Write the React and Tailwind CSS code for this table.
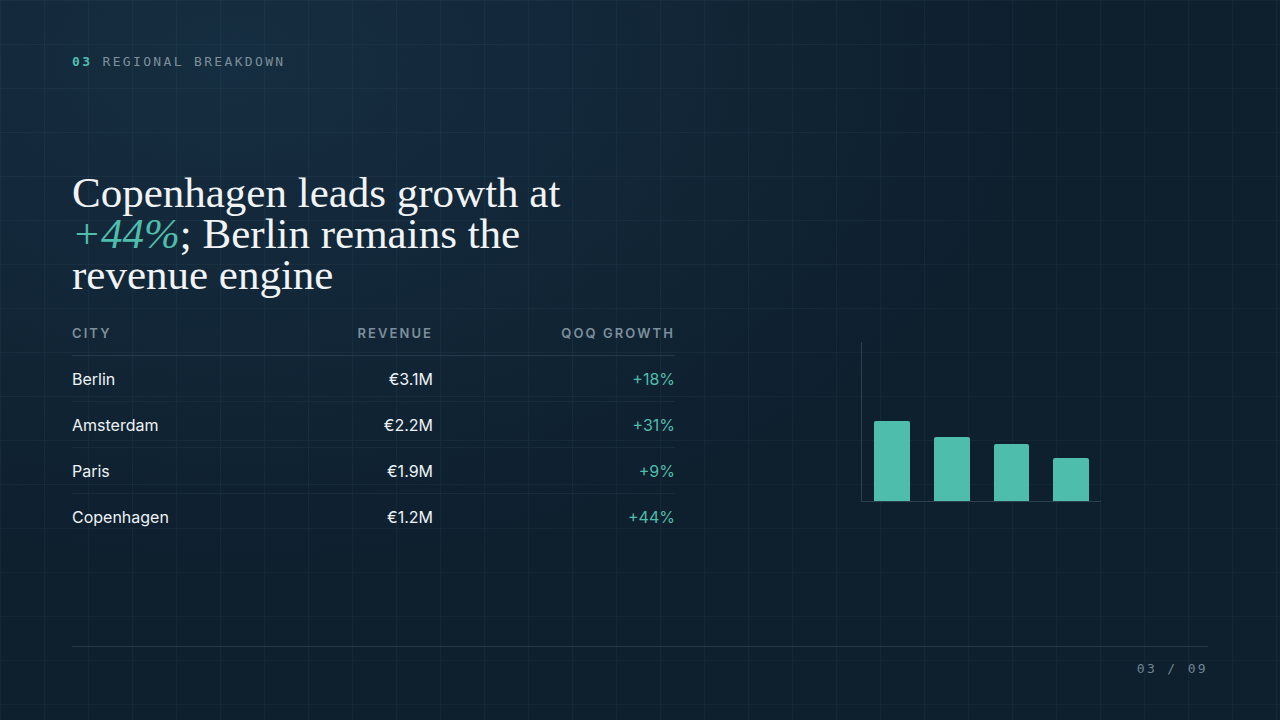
import React from 'react';

const rows = [
  { city: 'Berlin', revenue: '€3.1M', growth: '+18%' },
  { city: 'Amsterdam', revenue: '€2.2M', growth: '+31%' },
  { city: 'Paris', revenue: '€1.9M', growth: '+9%' },
  { city: 'Copenhagen', revenue: '€1.2M', growth: '+44%' },
];

const bars = [80, 64, 57, 43];

function App() {
  return (
    <div className="w-[1280px] h-[720px] overflow-hidden flex flex-col px-[72px] bg-[#0e1f2e] bg-[linear-gradient(to_right,rgba(120,170,200,0.06)_1px,transparent_1px),linear-gradient(to_bottom,rgba(120,170,200,0.06)_1px,transparent_1px),radial-gradient(ellipse_at_18%_8%,rgba(28,58,80,0.55),transparent_55%)] bg-[size:44px_44px,44px_44px,100%_100%]">
      <div className="pt-[54px] font-['DejaVu_Sans_Mono',monospace] text-[13px] leading-4 tracking-[0.18em] text-[#7d909b]">
        <span className="font-bold text-[#4fbdac]">03</span> REGIONAL BREAKDOWN
      </div>

      <h1 className="mt-[102px] font-['Liberation_Serif',serif] text-[43px] leading-[41px] text-[#f1f4f6]">
        Copenhagen leads growth at
        <br />
        <em className="text-[#4fbdac]">+44%</em>; Berlin remains the
        <br />
        revenue engine
      </h1>

      <div className="mt-[30px] flex font-['Inter',sans-serif]">
        <div className="w-[603px]">
          <div className="flex pb-[14px] border-b border-[#26394a] text-[13px] leading-4 font-semibold tracking-[0.16em] text-[#7c8f9b]">
            <div className="flex-1">CITY</div>
            <div className="w-[160px] text-right">REVENUE</div>
            <div className="w-[242px] text-right">QOQ GROWTH</div>
          </div>
          {rows.map((r, i) => (
            <div
              key={r.city}
              className={`flex items-center h-[46px] text-[16px] leading-6 ${i < rows.length - 1 ? 'border-b border-[#172b3b]' : ''}`}
            >
              <div className="flex-1 text-[#eef3f6]">{r.city}</div>
              <div className="w-[160px] text-right text-[#eef3f6]">{r.revenue}</div>
              <div className="w-[242px] text-right text-[#4fbdac]">{r.growth}</div>
            </div>
          ))}
        </div>

        <div className="flex-1 pl-[186px] pt-[17px]">
          <div className="w-[240px] h-[160px] border-l border-b border-[#2c4150] flex items-end gap-[24px] px-[12px]">
            {bars.map((h, i) => (
              <div
                key={i}
                className="w-[36px] rounded-t-[2px] bg-[#4fbdac]"
                style={{ height: h }}
              />
            ))}
          </div>
        </div>
      </div>

      <div className="mt-auto border-t border-[#26394a] pt-[14px] pb-[43px] text-right font-['DejaVu_Sans_Mono',monospace] text-[13px] leading-4 tracking-[0.18em] text-[#6f8593]">
        03 / 09
      </div>
    </div>
  );
}

export default App;
